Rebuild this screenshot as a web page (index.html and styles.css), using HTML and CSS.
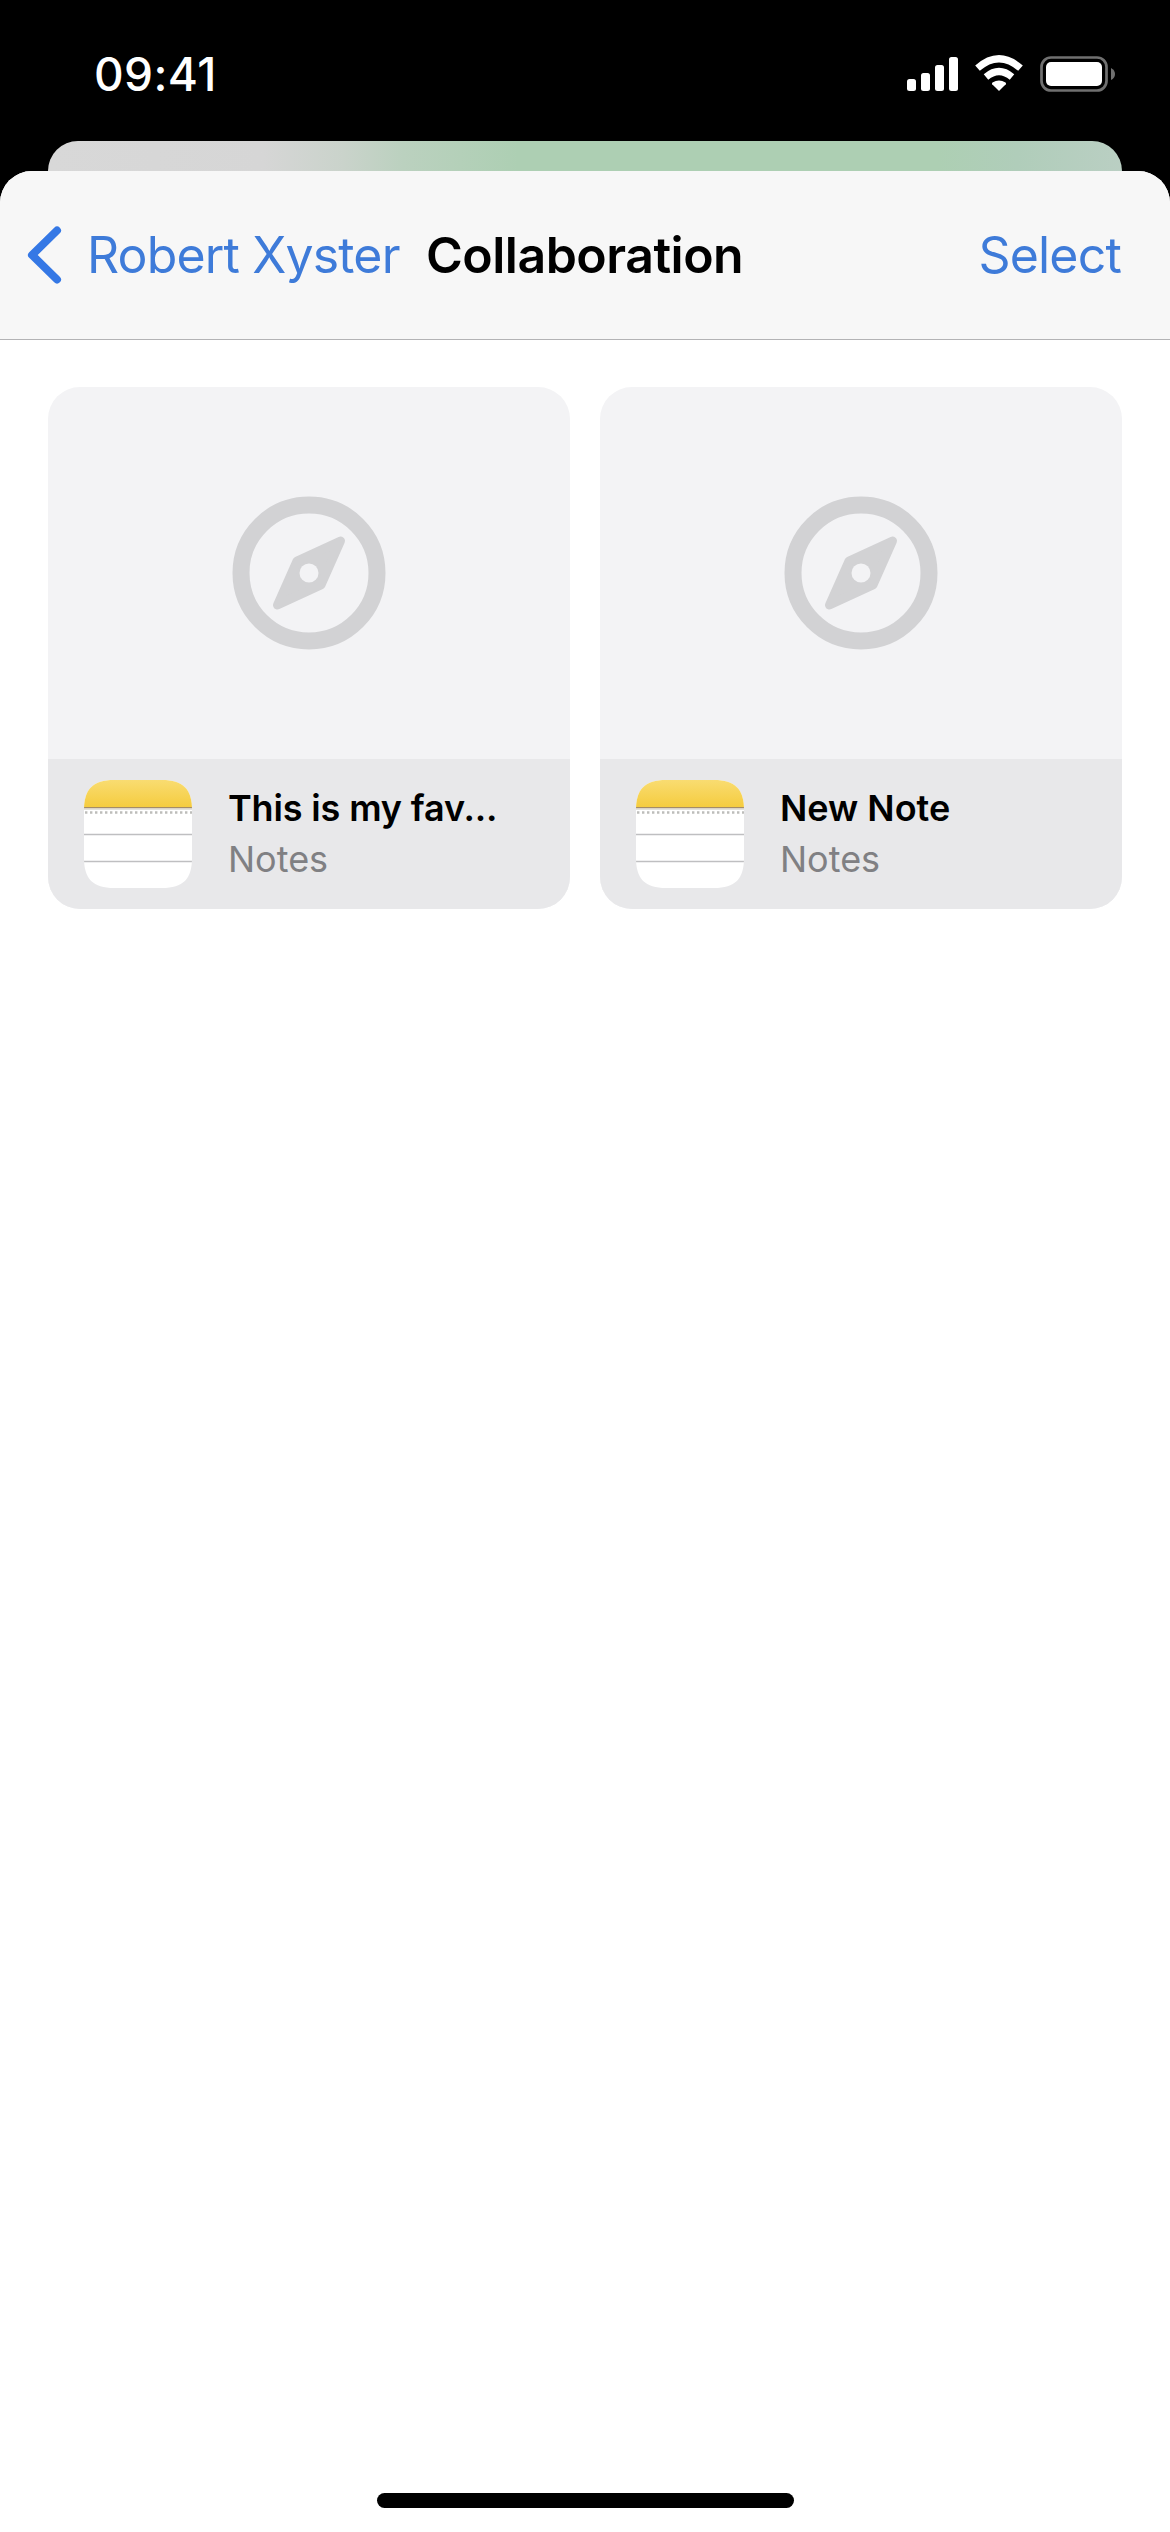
FILE: index.html
```html
<!DOCTYPE html>
<html lang="en">
<head>
<meta charset="utf-8">
<title>Collaboration</title>
<link rel="stylesheet" href="styles.css">
</head>
<body>
<svg class="defs" width="0" height="0" aria-hidden="true">
  <defs>
    <linearGradient id="notes-yellow" x1="0" y1="0" x2="0" y2="1">
      <stop offset="0" stop-color="#f9dc71"/>
      <stop offset="1" stop-color="#f5cc3f"/>
    </linearGradient>
    <clipPath id="notes-shape"><path d="M0 30C0 9 9 0 30 0H78C99 0 108 9 108 30V78C108 99 99 108 78 108H30C9 108 0 99 0 78Z"/></clipPath>
    <symbol id="compass" viewBox="-77 -77 154 154">
      <circle r="68" fill="none" stroke="#d2d2d4" stroke-width="17"/>
      <path d="M-12 -12L31.500 -32L12 12L-31.500 32Z" fill="#d2d2d4" stroke="#d2d2d4" stroke-width="9" stroke-linejoin="round"/>
      <circle r="9.500" fill="#f3f3f5"/>
    </symbol>
    <symbol id="notes" viewBox="0 0 108 108">
      <g clip-path="url(#notes-shape)">
        <rect width="108" height="108" fill="#fff"/>
        <rect width="108" height="27" fill="url(#notes-yellow)"/>
        <rect y="27" width="108" height="1.500" fill="#a58d66"/>
        <rect y="28.500" width="108" height="1.500" fill="#e4e2dc"/>
        <path d="M1 32.500H108" stroke="#bdbdba" stroke-width="2.600" stroke-dasharray="2.400 2.600"/>
        <path d="M0 54.500H108M0 81.500H108" stroke="#bfbfc1" stroke-width="1.600"/>
      </g>
    </symbol>
  </defs>
</svg>
<div class="screen">
  <div class="status">
    <span class="time">09:41</span>
    <svg class="indicators" width="210" height="40" viewBox="906 54 210 40" aria-hidden="true">
      <g fill="#fff">
        <rect x="907" y="79" width="9" height="12" rx="2.500"/>
        <rect x="921" y="73" width="9" height="18" rx="2.500"/>
        <rect x="935" y="65" width="9" height="26" rx="2.500"/>
        <rect x="949" y="57" width="9" height="34" rx="2.500"/>
        <path d="M999 91L992.200 84.200Q991.500 83.300 992.500 82.600Q999 78.200 1005.500 82.600Q1006.500 83.300 1005.800 84.200Z"/>
      </g>
      <path d="M986 77Q999 66 1012 77M977.500 68.200Q999 49.300 1020.500 68.200" fill="none" stroke="#fff" stroke-width="7"/>
      <rect x="1041.500" y="57.500" width="65" height="33" rx="9.500" fill="none" stroke="#707070" stroke-width="2.700"/>
      <rect x="1046" y="62" width="56" height="24" rx="5" fill="#fff"/>
      <path d="M1111 68Q1115 70 1115 74Q1115 78 1111 80Z" fill="#707070"/>
    </svg>
  </div>
  <div class="back-sheet"></div>
  <main class="sheet">
    <header class="nav">
      <a class="back">
        <svg width="35" height="58" viewBox="0 0 35 58" fill="none" stroke="#3578e5" stroke-width="8" stroke-linecap="round" stroke-linejoin="round" aria-hidden="true"><path d="M30 4.500L5 29L30 53.500"/></svg>
        <span class="back-label">Robert Xyster</span>
      </a>
      <h1 class="title">Collaboration</h1>
      <a class="select">Select</a>
    </header>
    <section class="grid">
      <article class="card">
        <div class="preview"><svg width="154" height="154"><use href="#compass"/></svg></div>
        <div class="caption">
          <svg width="108" height="108"><use href="#notes"/></svg>
          <div class="labels"><div class="name name-long">This is my fav...</div><div class="app">Notes</div></div>
        </div>
      </article>
      <article class="card">
        <div class="preview"><svg width="154" height="154"><use href="#compass"/></svg></div>
        <div class="caption">
          <svg width="108" height="108"><use href="#notes"/></svg>
          <div class="labels"><div class="name">New Note</div><div class="app">Notes</div></div>
        </div>
      </article>
    </section>
    <div class="home-bar"></div>
  </main>
</div>
</body>
</html>
```
FILE: styles.css
```css
* { box-sizing: border-box; }
body { margin: 0; background: #000; font-family: Inter, "Liberation Sans", sans-serif; }
svg { display: block; flex: none; }
.defs { position: absolute; }
.screen { width: 1170px; height: 2532px; display: flex; flex-direction: column; overflow: hidden; background: #000; }
.status { height: 141px; flex: none; display: flex; justify-content: space-between; align-items: flex-start; padding: 54px 54px 0 94px; }
.time { color: #fff; font-size: 46px; font-weight: 550; line-height: 41px; letter-spacing: 0.4px; }
.back-sheet { height: 30px; flex: none; margin: 0 48px; border-radius: 30px 30px 0 0; background: linear-gradient(90deg, #d8d8d8 0, #d6d6d6 215px, #cad3cb 295px, #bbd1bf 355px, #adcfb3 470px, #adcfb3 890px, #b0cdba 970px, #bacfc3 1074px); }
.sheet { flex: 1; display: flex; flex-direction: column; background: #fff; border-radius: 32px 32px 0 0; overflow: hidden; }
.nav { height: 169px; flex: none; display: flex; align-items: center; padding: 0 49px 0 27px; background: #f7f7f7; border-bottom: 1px solid #b3b3b5; white-space: nowrap; }
.back { display: flex; align-items: center; color: #3e7bd9; width: 399px; gap: 25px; }
.back-label, .select { font-size: 50px; line-height: 60px; }
.back-label { letter-spacing: -0.85px; }
.title { margin: 0; font-size: 50px; font-weight: 600; line-height: 60px; letter-spacing: -0.5px; color: #000; }
.select { margin-left: auto; color: #3e7bd9; letter-spacing: -0.8px; }
.grid { display: grid; grid-template-columns: 522px 522px; gap: 30px; padding: 47px 48px 0; }
.card { height: 522px; border-radius: 32px; overflow: hidden; background: #f3f3f5; }
.preview { height: 372px; display: flex; align-items: center; justify-content: center; }
.caption { height: 150px; display: flex; align-items: center; gap: 36px; padding-left: 36px; background: #e8e8ea; white-space: nowrap; }
.name, .app { font-size: 36px; line-height: 51px; }
.name { font-weight: 600; color: #000; }
.name-long { letter-spacing: -0.15px; }
.app { color: #808083; }
.home-bar { width: 417px; height: 15px; margin: auto auto 24px; border-radius: 8px; background: #000; }
```
